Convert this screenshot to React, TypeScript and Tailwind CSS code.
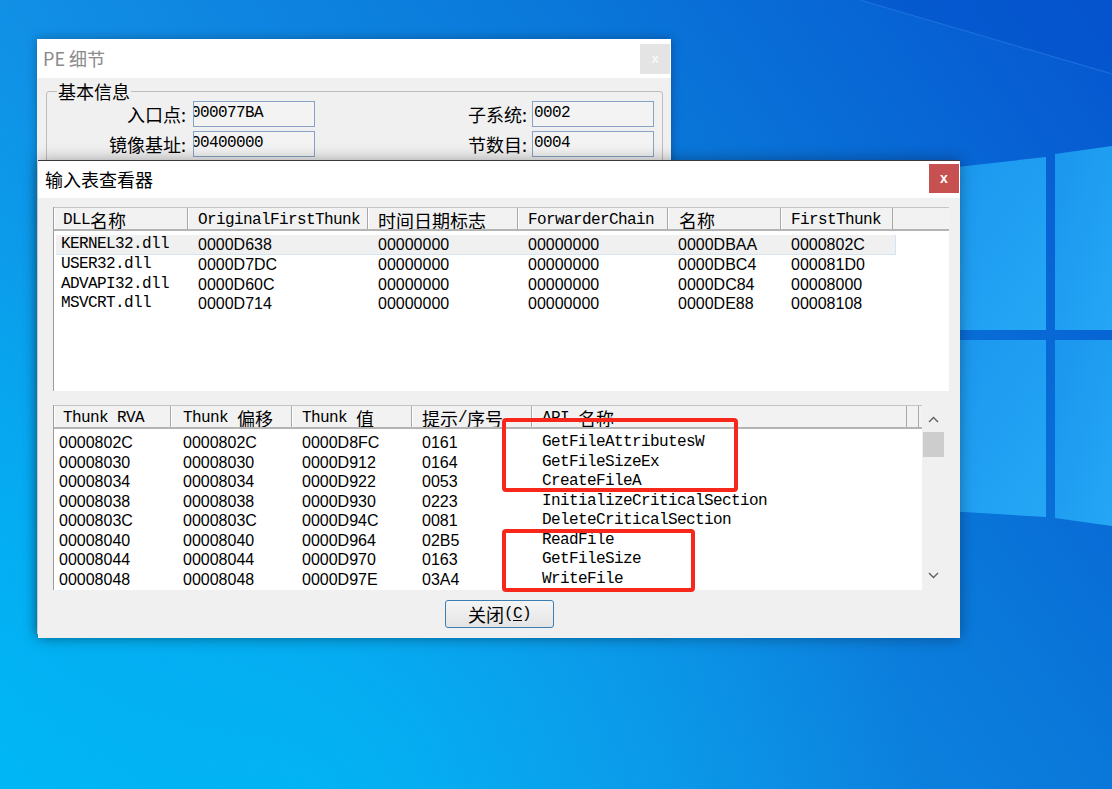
import React from "react";

const MONO =
  "font-['Liberation_Mono','Noto_Sans_CJK_SC',monospace] text-[16px] tracking-[-0.6px]";
const HEX = "font-['Liberation_Sans',sans-serif] text-[16px]";
const CJK_FONT = "font-['Noto_Sans_CJK_SC','Liberation_Sans',sans-serif]";

const CJK_SPLIT = /([\u3000-\u9fff\uff00-\uffef]+)/;
const CJK_TEST = /[\u3000-\u9fff\uff00-\uffef]/;

// header labels mix 9px ascii with 18px-wide CJK, like the old bitmap font
function Mixed({ text }: { text: string }) {
  return (
    <>
      {text
        .split(CJK_SPLIT)
        .filter(Boolean)
        .map((part, i) =>
          CJK_TEST.test(part) ? (
            <span key={i} className={`${CJK_FONT} text-[18px] leading-none tracking-normal`}>
              {part}
            </span>
          ) : (
            <span key={i} className="whitespace-pre">
              {part}
            </span>
          )
        )}
    </>
  );
}

const dllCols = [
  { label: "DLL名称", w: "w-[134px]", hp: "pl-[9px]" },
  { label: "OriginalFirstThunk", w: "w-[180px]", hp: "pl-[10px]" },
  { label: "时间日期标志", w: "w-[150px]", hp: "pl-[10px]" },
  { label: "ForwarderChain", w: "w-[150px]", hp: "pl-[10px]" },
  { label: "名称", w: "w-[113px]", hp: "pl-[11px]" },
  { label: "FirstThunk", w: "w-[112px]", hp: "pl-[10px]" },
];
const dllCellW = ["w-[132px]", "w-[180px]", "w-[150px]", "w-[150px]", "w-[113px]", "w-[112px]"];

const dllRows = [
  ["KERNEL32.dll", "0000D638", "00000000", "00000000", "0000DBAA", "0000802C"],
  ["USER32.dll", "0000D7DC", "00000000", "00000000", "0000DBC4", "000081D0"],
  ["ADVAPI32.dll", "0000D60C", "00000000", "00000000", "0000DC84", "00008000"],
  ["MSVCRT.dll", "0000D714", "00000000", "00000000", "0000DE88", "00008108"],
];

const thunkCols = [
  { label: "Thunk RVA", w: "w-[117px]", hp: "pl-[9px]", rp: "pl-[5px]" },
  { label: "Thunk 偏移", w: "w-[121px]", hp: "pl-[12px]", rp: "pl-[12px]" },
  { label: "Thunk 值", w: "w-[120px]", hp: "pl-[10px]", rp: "pl-[10px]" },
  { label: "提示/序号", w: "w-[120px]", hp: "pl-[10px]", rp: "pl-[10px]" },
  { label: "API 名称", w: "w-[375px]", hp: "pl-[10px]", rp: "pl-[10px]" },
];

const thunkRows = [
  ["0000802C", "0000802C", "0000D8FC", "0161", "GetFileAttributesW"],
  ["00008030", "00008030", "0000D912", "0164", "GetFileSizeEx"],
  ["00008034", "00008034", "0000D922", "0053", "CreateFileA"],
  ["00008038", "00008038", "0000D930", "0223", "InitializeCriticalSection"],
  ["0000803C", "0000803C", "0000D94C", "0081", "DeleteCriticalSection"],
  ["00008040", "00008040", "0000D964", "02B5", "ReadFile"],
  ["00008044", "00008044", "0000D970", "0163", "GetFileSize"],
  ["00008048", "00008048", "0000D97E", "03A4", "WriteFile"],
];

function Wallpaper() {
  return (
    <svg className="absolute inset-0" width="1112" height="789" viewBox="0 0 1112 789">
      <defs>
        <linearGradient id="sky" gradientUnits="userSpaceOnUse" x1="0" y1="789" x2="1112" y2="0">
          <stop offset="0" stopColor="#00b5f5" />
          <stop offset="0.35" stopColor="#118ee5" />
          <stop offset="0.65" stopColor="#0a79da" />
          <stop offset="1" stopColor="#0656d0" />
        </linearGradient>
        <radialGradient id="glow" gradientUnits="userSpaceOnUse" cx="300" cy="800" r="620">
          <stop offset="0" stopColor="#00baf6" stopOpacity="0.75" />
          <stop offset="1" stopColor="#00baf6" stopOpacity="0" />
        </radialGradient>
        <linearGradient id="pane" x1="0" y1="0" x2="1" y2="1">
          <stop offset="0" stopColor="#1a96ee" />
          <stop offset="1" stopColor="#25a7f5" />
        </linearGradient>
      </defs>
      <rect width="1112" height="789" fill="url(#sky)" />
      <rect width="1112" height="789" fill="url(#glow)" />
      <polygon points="860,0 1112,0 1112,74" fill="#0450ca" opacity="0.45" />
      <line x1="860" y1="0" x2="1112" y2="74" stroke="#4da2f2" strokeOpacity="0.3" strokeWidth="1.2" />
      <polygon points="930,170 1046,157 1046,330 930,330" fill="url(#pane)" />
      <polygon points="1055,154 1112,146 1112,330 1055,330" fill="url(#pane)" />
      <polygon points="930,340 1046,340 1046,517 930,510" fill="url(#pane)" />
      <polygon points="1055,340 1112,340 1112,526 1055,518" fill="url(#pane)" />
    </svg>
  );
}

function Field({ value, clip }: { value: string; clip?: boolean }) {
  return (
    <div className="w-[122px] h-[26px] shrink-0 overflow-hidden border border-[#86a3c4] bg-[#f3f3f3] pt-[2px]">
      <div className={`${MONO} leading-[18px] text-black ${clip ? "-ml-[3px]" : "pl-[1px]"}`}>{value}</div>
    </div>
  );
}

function InfoRow({ l1, v1, l2, v2 }: { l1: string; v1: string; l2: string; v2: string }) {
  return (
    <div className="flex items-center h-[26px]">
      <div className={`w-[139px] mr-[7px] text-right ${CJK_FONT} text-[18px] leading-none text-black`}>{l1}</div>
      <Field value={v1} clip />
      <div className={`w-[212px] mr-[5px] text-right ${CJK_FONT} text-[18px] leading-none text-black`}>{l2}</div>
      <Field value={v2} />
    </div>
  );
}

function PeWindow() {
  return (
    <div className="absolute left-[37px] top-[39px] w-[634px] h-[595px] bg-[#f0f0f0] shadow-[0_0_10px_rgba(0,0,0,0.3)]">
      <div className="flex justify-between h-[39px] bg-white">
        <div className={`flex items-center pl-[6px] ${CJK_FONT} text-[18px] text-[#8a8a8a]`}>PE 细节</div>
        <div className="mt-[5px] mr-[1px] w-[30px] h-[30px] bg-[#e4e4e4] flex items-center justify-center font-['Liberation_Sans',sans-serif] text-[13px] font-bold text-[#f7f7f7]">
          x
        </div>
      </div>
      <fieldset className="ml-[9px] mt-[4px] w-[617px] h-[220px] border border-[#bdbdbd] rounded-[3px]">
        <legend className={`ml-[10px] px-[1px] ${CJK_FONT} text-[18px] leading-[18px] text-black`}>基本信息</legend>
        <div className="flex flex-col gap-[4px] pt-[1px]">
          <InfoRow l1="入口点:" v1="000077BA" l2="子系统:" v2="0002" />
          <InfoRow l1="镜像基址:" v1="00400000" l2="节数目:" v2="0004" />
          <InfoRow l1="" v1="00001000" l2="文件块对齐:" v2="0200" />
        </div>
      </fieldset>
    </div>
  );
}

function HeaderCell({ w, hp, label }: { w: string; hp: string; label: string }) {
  return (
    <div
      className={`${w} ${hp} pt-[3px] shrink-0 flex items-center border-r border-r-[#a8a8a8] shadow-[inset_1px_0_0_#ffffff] ${MONO} text-black whitespace-nowrap overflow-hidden`}
    >
      <Mixed text={label} />
    </div>
  );
}

function DllList() {
  return (
    <div className="w-[896px] h-[184px] bg-white border-l border-l-[#9c9c9c] flex flex-col">
      <div className="flex h-[24px] bg-[#f2f2f2] border-t border-t-[#c4c4c4] border-b-2 border-b-[#b4b4b4]">
        {dllCols.map((c) => (
          <HeaderCell key={c.label} w={c.w} hp={c.hp} label={c.label} />
        ))}
        <div className="flex-1" />
      </div>
      <div className="pt-[4px]">
        {dllRows.map((row, i) => (
          <div
            key={row[0]}
            className={`ml-[2px] w-[840px] h-[19.5px] flex items-center ${
              i === 0 ? "bg-[#f0f0f0] border-r border-b border-[#d3e4f5]" : ""
            }`}
          >
            {row.map((cell, j) => (
              <div
                key={j}
                className={`${dllCellW[j]} shrink-0 ${j === 0 ? "pl-[5px]" : "pl-[10px]"} ${
                  j === 0 ? MONO : HEX
                } leading-[19px] pt-[1px] text-black whitespace-nowrap`}
              >
                {cell}
              </div>
            ))}
          </div>
        ))}
      </div>
    </div>
  );
}

function Chevron({ down }: { down?: boolean }) {
  return (
    <svg width="11" height="7" viewBox="0 0 11 7">
      <polyline
        points={down ? "1,1 5.5,5.5 10,1" : "1,6 5.5,1.5 10,6"}
        fill="none"
        stroke="#606060"
        strokeWidth="1.4"
      />
    </svg>
  );
}

function ThunkList() {
  return (
    <div className="relative w-[892px] h-[185px] bg-white border-l border-l-[#9c9c9c] flex">
      <div className="flex-1 flex flex-col min-w-0">
        <div className="flex h-[24px] bg-[#f2f2f2] border-t border-t-[#c4c4c4] border-b-2 border-b-[#b4b4b4]">
          {thunkCols.map((c) => (
            <HeaderCell key={c.label} w={c.w} hp={c.hp} label={c.label} />
          ))}
          <div className="flex-1 mr-[3px] border-r border-r-[#a8a8a8]" />
        </div>
        <div className="pt-[4px]">
          {thunkRows.map((row) => (
            <div key={row[0]} className="h-[19.5px] flex items-center">
              {row.map((cell, j) => (
                <div
                  key={j}
                  className={`${thunkCols[j].w} ${thunkCols[j].rp} shrink-0 ${
                    j === 4 ? MONO : HEX
                  } leading-[19px] text-black whitespace-nowrap`}
                >
                  {cell}
                </div>
              ))}
            </div>
          ))}
        </div>
      </div>
      <div className="w-[23px] shrink-0 bg-[#f0f0f0] flex flex-col">
        <div className="h-[27px] flex items-center justify-center pt-[2px]">
          <Chevron />
        </div>
        <div className="h-[25px] mx-[1px] bg-[#cdcdcd]" />
        <div className="flex-1" />
        <div className="h-[27px] flex items-center justify-center pb-[2px]">
          <Chevron down />
        </div>
      </div>
      {/* annotation boxes drawn over the list */}
      <div className="absolute left-[448px] top-[13px] w-[236px] h-[74px] border-4 border-[#f7271c] rounded-[4px]" />
      <div className="absolute left-[448px] top-[124px] w-[193px] h-[63px] border-4 border-[#f7271c] rounded-[4px]" />
    </div>
  );
}

function ImportDialog() {
  return (
    <div className="absolute left-[38px] top-[160px] w-[922px] h-[478px] bg-[#f0f0f0] border-t border-t-[#3a3a3a] shadow-[0_0_14px_rgba(0,0,0,0.35)] flex flex-col">
      <div className="flex justify-between h-[37px] bg-white shrink-0">
        <div className={`flex items-center pl-[7px] ${CJK_FONT} text-[18px] text-black`}>输入表查看器</div>
        <div className="mt-[3px] mr-[1px] w-[30px] h-[29px] bg-[#c75050] flex items-center justify-center font-['Liberation_Sans',sans-serif] text-[14px] font-bold text-white">
          x
        </div>
      </div>
      <div className="flex flex-col pt-[9px] pl-[15px]">
        <DllList />
        <div className="mt-[14px]">
          <ThunkList />
        </div>
        <div className="mt-[10px] ml-[392px] w-[109px] h-[28px] rounded-[3px] border border-[#3c7db3] bg-[linear-gradient(#f5f5f5,#e4e4e4)] flex items-center justify-center text-black">
          <span className={`${CJK_FONT} text-[18px] leading-none`}>关闭</span>
          <span className={`${MONO} leading-none`}>
            (<span className="underline underline-offset-2">C</span>)
          </span>
        </div>
      </div>
    </div>
  );
}

export default function App() {
  return (
    <div className="relative w-[1112px] h-[789px] overflow-hidden">
      <Wallpaper />
      <PeWindow />
      <ImportDialog />
    </div>
  );
}
